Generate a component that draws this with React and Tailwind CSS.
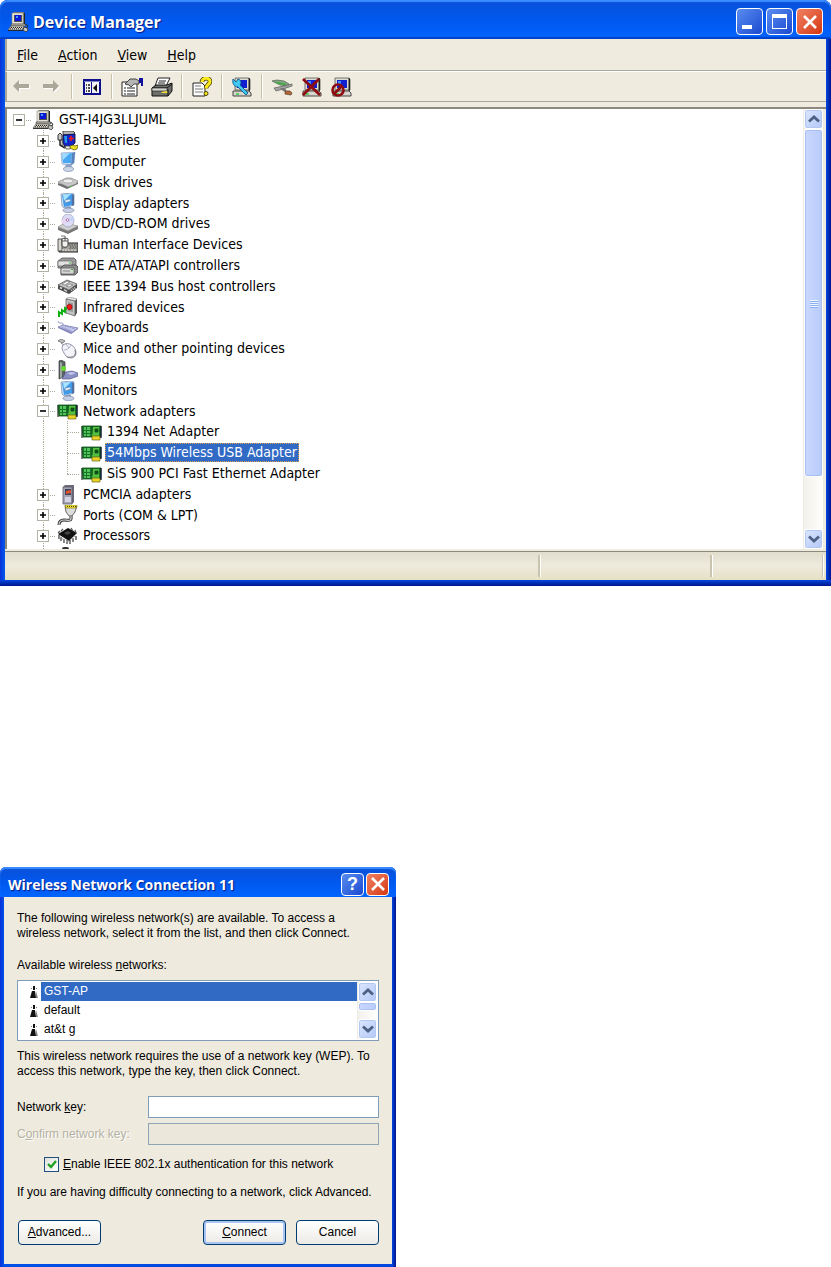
import React, { useState } from 'react';

const OldComputer = () => (
  <svg viewBox="0 0 21 20" className="w-[21px] h-5 shrink-0" aria-hidden="true">
    <path d="M5 1l1-1h10v12H5z" fill="#77756c" />
    <path d="M4 1h11v11H4z" fill="#e4e1d6" stroke="#8c8a80" strokeWidth="0.6" />
    <path d="M6 3h8v7H6z" fill="#55534c" />
    <path d="M7 3h6v6H7z" fill="#0a16d8" />
    <path d="M8 4h2v2H8z" fill="#3c9cf8" />
    <path d="M16 1h1v11h-1z" fill="#222" />
    <path d="M3 12h14l1 2H3z" fill="#b9b6aa" stroke="#444" strokeWidth="0.6" />
    <path d="M3 14h13l-2 4H0z" fill="#d8d5ca" stroke="#55534c" strokeWidth="0.7" />
    <path d="M3 15.500h11M2 16.800h11" stroke="#222" strokeDasharray="1 1" />
    <path d="M0 18.500h15" stroke="#222" strokeWidth="0.9" />
    <path d="M17 12l2 1 1 2-2 1" fill="none" stroke="#333" />
    <path d="M16 15l3 1 1 2-2 2-3-2z" fill="#c8c5bb" stroke="#333" strokeWidth="0.8" />
  </svg>
);

const Battery = () => (
  <svg viewBox="0 0 21 20" className="w-[21px] h-5 shrink-0" aria-hidden="true">
    <path d="M1 4l2-2 2 2v5H1z" fill="#c8c8c8" stroke="#222" strokeWidth="0.9" />
    <path d="M3 9v5l5 3" fill="none" stroke="#222" strokeWidth="1.5" />
    <path d="M5 8l3 2v7l-3-3z" fill="#d0d0cc" stroke="#333" strokeWidth="0.6" />
    <path d="M6 0h10l2 2-2 2H6z" fill="#b5b5b5" stroke="#222" strokeWidth="0.8" />
    <path d="M6 4l12-1v9l-4 4H8L6 12z" fill="#1424c8" stroke="#10103a" strokeWidth="0.9" />
    <path d="M7 5h3v7H8z" fill="#2898e8" />
    <path d="M14 5v5M12 7.500h5" stroke="#f01818" strokeWidth="1.6" />
    <path d="M8 15h7l-2 3H9z" fill="#e8e8e4" stroke="#333" strokeWidth="0.7" />
    <path d="M13 15l3-1 2 1 3-1-1 4-3 1-4-2z" fill="#e8e020" stroke="#5a5200" strokeWidth="0.7" />
  </svg>
);

const Computer = () => (
  <svg viewBox="0 0 21 20" className="w-[21px] h-5 shrink-0" aria-hidden="true">
    <path d="M4 1l14-1-1 11-4 3-8-2z" fill="#c9dcf4" stroke="#8ea6c8" strokeWidth="0.7" />
    <path d="M5 2l10-1-1 10-8 0z" fill="#49a8f2" />
    <path d="M5 2l8-1-7 7z" fill="#9fdcff" />
    <path d="M15 1l3-1-1 11-3 2z" fill="#5a83bc" />
    <path d="M9 12h5l1 4H8z" fill="#8ba3c6" />
    <ellipse cx="11.500" cy="17" rx="5" ry="2.400" fill="#cbd6e8" stroke="#7d8aa8" strokeWidth="0.7" />
  </svg>
);

const Disk = () => (
  <svg viewBox="0 0 21 20" className="w-[21px] h-5 shrink-0" aria-hidden="true">
    <path d="M1 10v2l9 4 11-5V9l-9 4z" fill="#6e6e6e" />
    <path d="M1 9l8-4h5l7 3-2 3-8 3z" fill="#c9c9c9" stroke="#8a8a8a" strokeWidth="0.7" />
    <ellipse cx="11" cy="8" rx="5" ry="2" fill="#eeeeee" stroke="#999" strokeWidth="0.6" />
    <path d="M13 13.500h2" stroke="#4cc04c" />
  </svg>
);

const Display = () => (
  <svg viewBox="0 0 21 20" className="w-[21px] h-5 shrink-0" aria-hidden="true">
    <path d="M4 1l11-1 2 1v11l-10 3-2-2z" fill="#d4dff0" stroke="#7089ae" strokeWidth="0.7" />
    <path d="M5 2l10-1v11l-8 2z" fill="#3f9bea" />
    <path d="M6 2l8-1-7 7z" fill="#a8e4ff" />
    <path d="M8 7l5-1 1 2-6 2z" fill="#e6eef8" stroke="#5b7fae" strokeWidth="0.6" />
    <path d="M15 1l2 1v10l-2 1z" fill="#5270a0" />
    <path d="M9 14h5v3H9z" fill="#8a9dbd" />
    <ellipse cx="11.500" cy="17.300" rx="5.500" ry="2.300" fill="#c6d0e4" stroke="#7d8aa8" strokeWidth="0.7" />
  </svg>
);

const Disc = () => (
  <svg viewBox="0 0 21 20" className="w-[21px] h-5 shrink-0" aria-hidden="true">
    <path d="M1 13v3l10 4 10-5v-3z" fill="#777" />
    <path d="M1 13l7-4 13 3-10 5z" fill="#cfcfcf" stroke="#8c8c8c" strokeWidth="0.7" />
    <ellipse cx="11" cy="6.500" rx="6" ry="6.500" fill="#dcdcf4" stroke="#a4a4c4" strokeWidth="0.8" />
    <path d="M11 6l5-4a7 7 0 0 1 1 5z" fill="#c4d2f8" />
    <path d="M11 6l-5 4a7 7 0 0 1-1-5z" fill="#e8d6f2" />
    <circle cx="10.500" cy="6" r="1.300" fill="#fff" stroke="#a050a0" strokeWidth="0.8" />
  </svg>
);

const Hid = () => (
  <svg viewBox="0 0 21 20" className="w-[21px] h-5 shrink-0" aria-hidden="true">
    <path d="M2 8h19v9H2z" fill="#a4a29a" stroke="#222" />
    <path d="M1 4h4v12H1z" fill="#d8d6d0" stroke="#333" strokeWidth="0.8" />
    <path d="M12 10h8M13 12h7M12 14h8" stroke="#444" strokeDasharray="1.500 1" />
    <path d="M5 15h14" stroke="#eee" strokeDasharray="2 1" />
    <path d="M5 4c0-1 6-1 6 0v6c0 3-6 3-6 0z" fill="#f2f0ea" stroke="#333" strokeWidth="0.9" />
    <path d="M8 1v5M5 6h6" stroke="#444" strokeWidth="0.8" />
    <path d="M4 1h4" stroke="#777" />
  </svg>
);

const Ide = () => (
  <svg viewBox="0 0 21 20" className="w-[21px] h-5 shrink-0" aria-hidden="true">
    <path d="M1 5l4-3h12l2 2v5l-3 3H1z" fill="#9a9a9a" stroke="#555" strokeWidth="0.8" />
    <path d="M1 5h14v5H1z" fill="#e2e2e2" stroke="#666" strokeWidth="0.7" />
    <path d="M4 12l3-3h12l2 2v5l-3 3H4z" fill="#8a8a8a" stroke="#444" strokeWidth="0.8" />
    <path d="M4 12h13v6H4z" fill="#d6d6d6" stroke="#555" strokeWidth="0.7" />
    <path d="M6 15h7" stroke="#888" />
    <path d="M14 13.500h2M12 7h2" stroke="#32b432" />
  </svg>
);

const Firewire = () => (
  <svg viewBox="0 0 21 20" className="w-[21px] h-5 shrink-0" aria-hidden="true">
    <path d="M1 8v4l11 5 8-6V7l-8 6z" fill="#4c4c4c" />
    <path d="M1 8l9-5 10 4-8 6z" fill="#c4c4c4" stroke="#555" strokeWidth="0.8" />
    <path d="M5 7l5-3 3 1-5 3zM9 9l4-2 3 1-4 2z" fill="#f0f0f0" stroke="#666" strokeWidth="0.6" />
    <path d="M3 10.500l2 1M7 12.500l3 2" stroke="#ddd" strokeWidth="1.500" />
    <path d="M14 13.500l5-3" stroke="#ccc" strokeDasharray="1 1" strokeWidth="2" />
  </svg>
);

const Infrared = () => (
  <svg viewBox="0 0 21 20" className="w-[21px] h-5 shrink-0" aria-hidden="true">
    <path d="M9 2l3-2 8 2-2 2z" fill="#ececec" stroke="#777" strokeWidth="0.6" />
    <path d="M9 2l9 2v15l-9-3z" fill="#c4c4c4" stroke="#555" strokeWidth="0.7" />
    <path d="M18 4l2-2v14l-2 3z" fill="#555" />
    <path d="M11 5l5 1v9l-5-1z" fill="#9a9a9a" />
    <circle cx="12.500" cy="10" r="2.700" fill="#f01c1c" stroke="#7c0808" strokeWidth="0.6" />
    <path d="M2 20v-5l3 2v-4l3 2v-4l2 1" fill="none" stroke="#10b010" strokeWidth="2" />
  </svg>
);

const KeyboardIcon = () => (
  <svg viewBox="0 0 21 20" className="w-[21px] h-5 shrink-0" aria-hidden="true">
    <path d="M1 3c0 4 6 0 5 4" fill="none" stroke="#9898c4" />
    <path d="M1 9l5-2 15 3-6 5z" fill="#c6c9ee" stroke="#7678b0" strokeWidth="0.8" />
    <path d="M1 9v1l13 6 7-5v-1l-6 4z" fill="#8486bc" />
    <path d="M5 9l10 4M8 8l10 3M4 10l9 3" stroke="#8286bc" strokeDasharray="1.500 1" strokeWidth="0.9" />
  </svg>
);

const MouseIcon = () => (
  <svg viewBox="0 0 21 20" className="w-[21px] h-5 shrink-0" aria-hidden="true">
    <path d="M1 2l3-2 4 2-2 2zM4 4l4 3" fill="#c2c2c2" stroke="#777" strokeWidth="0.9" />
    <path d="M6 6c5-4 13 1 13 8 0 6-7 6-10 3C6 13 4 9 6 6z" fill="#f4f4fa" stroke="#8888a0" strokeWidth="0.9" />
    <path d="M7 11c3 0 6-2 7-5M9 5l3 4" fill="none" stroke="#a0a0b8" strokeWidth="0.8" />
    <path d="M18 11c2 6-3 8-8 7" fill="none" stroke="#777" />
  </svg>
);

const Modem = () => (
  <svg viewBox="0 0 21 20" className="w-[21px] h-5 shrink-0" aria-hidden="true">
    <path d="M2 1l2-1 4 2v14l-6 3z" fill="#5c6464" stroke="#333" strokeWidth="0.7" />
    <path d="M3 2l2 1v14l-2 1z" fill="#9ca4a4" />
    <circle cx="6.500" cy="8.500" r="2.500" fill="#68d830" />
    <path d="M9 12l6-1 6 2v3l-8 3H5z" fill="#8a90c4" stroke="#585c8c" strokeWidth="0.7" />
    <path d="M10 13l5-1 4 1-5 2z" fill="#c4c8ec" />
  </svg>
);

const NetCard = () => (
  <svg viewBox="0 0 21 20" className="w-[21px] h-5 shrink-0" aria-hidden="true">
    <path d="M1 4v12" stroke="#555" strokeWidth="1.500" />
    <path d="M1 4h19v11H2z" fill="#1a7428" stroke="#0c4a16" strokeWidth="0.8" />
    <path d="M3 5h2v3H3zM6 5h3v3H6zM3 9h2v2H3zM6 9h3v2H6zM3 12h2v2H3zM6 12h3v2H6z" fill="#54c45c" />
    <path d="M12 5h6v9h-7z" fill="#54c040" />
    <path d="M11 4v8M14 7h3v3h-3z" fill="#105020" stroke="#0c4a16" strokeWidth="0.8" />
    <path d="M11 14h8v4h-8z" fill="#e8d228" stroke="#5a5200" strokeWidth="0.6" />
    <path d="M20 4v12" stroke="#113" strokeWidth="1.200" />
  </svg>
);

const Pcmcia = () => (
  <svg viewBox="0 0 21 20" className="w-[21px] h-5 shrink-0" aria-hidden="true">
    <path d="M6 2l2-2h9v17l-2 2z" fill="#6c6c7c" />
    <path d="M6 2h9v17l-9 0z" fill="#a4a4b4" stroke="#5c5c6c" strokeWidth="0.8" />
    <path d="M8 4h6v6H8z" fill="#404058" />
    <path d="M9 6l5-1v3l-5 1z" fill="#e05430" />
    <path d="M8 12h6v5H8z" fill="#d4d4e4" />
  </svg>
);

const Ports = () => (
  <svg viewBox="0 0 21 20" className="w-[21px] h-5 shrink-0" aria-hidden="true">
    <path d="M8 1l12 0-2 6-3 4h-3L9 7z" fill="#dcdcdc" stroke="#444" strokeWidth="0.8" />
    <path d="M8 0h12l-1 3H9z" fill="#f4e840" stroke="#8c7c00" strokeWidth="0.7" />
    <path d="M10 1.500h9" stroke="#554b00" strokeDasharray="1 1" />
    <path d="M14 11c1 6-3 4-7 4-4 0-5 2-5 5" fill="none" stroke="#333" strokeWidth="3" />
    <path d="M14 11c1 6-3 4-7 4-4 0-5 2-5 5" fill="none" stroke="#d4d4d4" strokeWidth="1.200" />
  </svg>
);

const Cpu = () => (
  <svg viewBox="0 0 21 20" className="w-[21px] h-5 shrink-0" aria-hidden="true">
    <path d="M2 9v4M4 11v4M7 13v4M10 14v4M13 14v4M16 12v4M19 10v4" stroke="#444" fill="none" strokeWidth="1.300" />
    <path d="M1 8l10-6 9 5-8 8z" fill="#111" />
    <path d="M3 5l-2 2M6 3L4 5M14 2l2 3M18 4l1 3" stroke="#555" strokeWidth="1.300" />
    <path d="M7 7l4-2 3 2-4 2z" fill="#444" />
    <path d="M3 11l8 5 8-7" fill="none" stroke="#aaa" strokeDasharray="1 1.500" strokeWidth="1.500" />
  </svg>
);

const devices = [
  { level: 0, label: 'GST-I4JG3LLJUML', icon: OldComputer, toggle: '-' },
  { level: 1, label: 'Batteries', icon: Battery, toggle: '+' },
  { level: 1, label: 'Computer', icon: Computer, toggle: '+' },
  { level: 1, label: 'Disk drives', icon: Disk, toggle: '+' },
  { level: 1, label: 'Display adapters', icon: Display, toggle: '+' },
  { level: 1, label: 'DVD/CD-ROM drives', icon: Disc, toggle: '+' },
  { level: 1, label: 'Human Interface Devices', icon: Hid, toggle: '+' },
  { level: 1, label: 'IDE ATA/ATAPI controllers', icon: Ide, toggle: '+' },
  { level: 1, label: 'IEEE 1394 Bus host controllers', icon: Firewire, toggle: '+' },
  { level: 1, label: 'Infrared devices', icon: Infrared, toggle: '+' },
  { level: 1, label: 'Keyboards', icon: KeyboardIcon, toggle: '+' },
  { level: 1, label: 'Mice and other pointing devices', icon: MouseIcon, toggle: '+' },
  { level: 1, label: 'Modems', icon: Modem, toggle: '+' },
  { level: 1, label: 'Monitors', icon: Display, toggle: '+' },
  { level: 1, label: 'Network adapters', icon: NetCard, toggle: '-' },
  { level: 2, label: '1394 Net Adapter', icon: NetCard },
  { level: 2, label: '54Mbps Wireless USB Adapter', icon: NetCard },
  { level: 2, label: 'SiS 900 PCI Fast Ethernet Adapter', icon: NetCard, last: true },
  { level: 1, label: 'PCMCIA adapters', icon: Pcmcia, toggle: '+' },
  { level: 1, label: 'Ports (COM & LPT)', icon: Ports, toggle: '+' },
  { level: 1, label: 'Processors', icon: Cpu, toggle: '+' }
];

const BackIcon = () => (
  <svg viewBox="0 0 18 15" className="w-[18px] h-[15px]" aria-hidden="true">
    <path d="M1 8l6-6v4h10v4H7v4z" fill="#fff" />
    <path d="M0 7l6-6v4h10v4H6v4z" fill="#aca899" />
  </svg>
);

const ForwardIcon = () => (
  <svg viewBox="0 0 18 15" className="w-[18px] h-[15px]" aria-hidden="true">
    <path d="M17 8l-6-6v4H1v4h10v4z" fill="#fff" />
    <path d="M16 7l-6-6v4H0v4h10v4z" fill="#aca899" />
  </svg>
);

const PaneIcon = () => (
  <svg viewBox="0 0 18 16" className="w-[18px] h-4" aria-hidden="true">
    <path d="M0 0h18v16H0z" fill="#10108c" />
    <path d="M1 2h16v1H1z" fill="#7c84c4" />
    <path d="M2 3h6v11H2zM9 3h7v11H9z" fill="#f4f4f4" />
    <path d="M3 6h1M5 6h2M3 9h1M5 9h2M3 12h1M5 12h2" stroke="#111" strokeWidth="1.300" />
    <path d="M14 5v8l-4-4z" fill="#111" />
  </svg>
);

const PropertiesIcon = () => (
  <svg viewBox="0 0 22 20" className="w-[22px] h-5" aria-hidden="true">
    <path d="M1 5h15v14H1z" fill="#fff" stroke="#222" />
    <path d="M3 11h2M3 14h2M3 17h2M6 11h8M6 14h8M6 17h8" stroke="#222" strokeWidth="1.200" />
    <path d="M4 7l5-5 6 0 3 2v3h-5l-3 3-2-2z" fill="#b4b4b4" stroke="#333" strokeWidth="0.900" />
    <path d="M18 1h4v8h-2V6h-2z" fill="#10109c" />
  </svg>
);

const PrinterIcon = () => (
  <svg viewBox="0 0 22 20" className="w-[22px] h-5" aria-hidden="true">
    <path d="M7 1h12l-4 8H4z" fill="#fff" stroke="#222" />
    <path d="M8 4h7M7 6h7" stroke="#222" />
    <path d="M1 11l4-3h11l5-2v8l-4 5H1z" fill="#6f6f6b" stroke="#111" />
    <path d="M1 11h15l5-4" fill="none" stroke="#111" />
    <path d="M1 11h15v3H1z" fill="#d6d6d2" stroke="#222" strokeWidth="0.700" />
    <path d="M10 15l6-1 1 2h-6z" fill="#f0e030" />
    <path d="M17 12v7" stroke="#111" />
  </svg>
);

const HelpIcon = () => (
  <svg viewBox="0 0 20 20" className="w-5 h-5" aria-hidden="true">
    <path d="M1 6h9l3 3v10H1z" fill="#fff" stroke="#222" />
    <path d="M3 9h6M3 12h8M3 15h8" stroke="#777" />
    <path d="M10 5c0-5 8-5 8-0.500 0 3-4 3.500-4 7" fill="none" stroke="#4a4200" strokeWidth="4.500" />
    <path d="M10 5c0-5 8-5 8-0.500 0 3-4 3.500-4 7" fill="none" stroke="#f8e81c" strokeWidth="3" />
    <circle cx="14" cy="16.500" r="2" fill="#f8e81c" stroke="#4a4200" />
  </svg>
);

// Small desktop machine shared by the scan, uninstall and disable buttons
const MachineShape = () => (
  <g>
    <path d="M4 1h14v12H4z" fill="#dedbd0" stroke="#555" strokeWidth="0.800" />
    <path d="M6 3h10v8H6z" fill="#1020d0" />
    <path d="M7 4h3v3H7z" fill="#4090f8" />
    <path d="M2 14h16l2 2v3H2z" fill="#d8d5cc" stroke="#333" strokeWidth="0.900" />
    <path d="M18 1v13l1-1V2z" fill="#222" stroke="#222" strokeWidth="0.600" />
    <path d="M5 17h3" stroke="#30d040" strokeWidth="1.500" />
  </g>
);

const ScanIcon = () => (
  <svg viewBox="0 0 22 20" className="w-[22px] h-5" aria-hidden="true">
    <MachineShape />
    <path d="M2 2l3 3 2-3c4 1 3 5 2 6l8 8-2 2-8-8C3 10 1 6 2 2z" fill="#40c8f0" stroke="#105890" strokeWidth="0.900" />
  </svg>
);

const UpdateIcon = () => (
  <svg viewBox="0 0 22 20" className="w-[22px] h-5" aria-hidden="true">
    <path d="M1 4l5-1 7 1 5 3-1 2-8-1z" fill="#8aa48a" stroke="#4a604a" strokeWidth="0.700" />
    <path d="M5 5.500l10 2" stroke="#3cae3c" strokeWidth="1.500" />
    <path d="M21 7l-8 2-10 2 2 3 7-2 9-3z" fill="#a4a4a0" stroke="#666" strokeWidth="0.800" />
    <path d="M9 11l3 3 4 1-2-4z" fill="#777" />
    <path d="M14 14l5 0 2 2-1 2-6-1z" fill="#b0683c" stroke="#5c3c24" strokeWidth="0.700" />
  </svg>
);

const UninstallIcon = () => (
  <svg viewBox="0 0 22 20" className="w-[22px] h-5" aria-hidden="true">
    <MachineShape />
    <path d="M2 2l17 16M18 2L2 18" stroke="#8c0c10" strokeWidth="2.800" />
  </svg>
);

const DisableIcon = () => (
  <svg viewBox="0 0 22 20" className="w-[22px] h-5" aria-hidden="true">
    <MachineShape />
    <circle cx="7" cy="13" r="5.500" fill="none" stroke="#8c0c10" strokeWidth="2.600" />
    <path d="M3 17l8-8" stroke="#8c0c10" strokeWidth="2.600" />
  </svg>
);

const toolbar = [
  { name: 'Back', icon: <BackIcon /> },
  { name: 'Forward', icon: <ForwardIcon /> },
  null,
  { name: 'Console tree', icon: <PaneIcon /> },
  null,
  { name: 'Properties', icon: <PropertiesIcon /> },
  { name: 'Print', icon: <PrinterIcon /> },
  null,
  { name: 'Help', icon: <HelpIcon /> },
  null,
  { name: 'Scan for hardware changes', icon: <ScanIcon /> },
  null,
  { name: 'Update driver', icon: <UpdateIcon /> },
  { name: 'Uninstall', icon: <UninstallIcon /> },
  { name: 'Disable', icon: <DisableIcon /> }
];

const Chevron = ({ down }) => (
  <svg viewBox="0 0 12 8" className={down ? 'w-3 h-2 rotate-180' : 'w-3 h-2'} aria-hidden="true">
    <path d="M1 6.500l5-4.500 5 4.500" fill="none" stroke="#4d6185" strokeWidth="2.800" />
  </svg>
);

const ScrollBar = ({ thumb, grip }) => (
  <div className="flex w-5 shrink-0 flex-col self-stretch border-l border-[#eeede5] bg-linear-to-r from-[#f3f1ec] to-[#fefefb]">
    <button type="button" aria-label="Scroll up" className="flex h-5 items-center justify-center rounded-[3px] border border-white bg-linear-to-br from-[#dbe6ff] to-[#b4c8f6] shadow-[inset_0_0_0_1px_#b3c8f0]">
      <Chevron />
    </button>
    <div className="min-h-0 flex-1">
      <div
        className="flex flex-col items-center justify-center gap-px rounded-[3px] border border-white bg-linear-to-r from-[#cad8ff] to-[#b8cbfa] shadow-[inset_0_0_0_1px_#a9bff0]"
        style={{ height: thumb }}
      >
        {grip && [0, 1, 2, 3].map(i => <span key={i} className="h-px w-2 bg-[#eef4fe] shadow-[0_1px_0_#8cb0f8]" />)}
      </div>
    </div>
    <button type="button" aria-label="Scroll down" className="flex h-5 items-center justify-center rounded-[3px] border border-white bg-linear-to-br from-[#dbe6ff] to-[#b4c8f6] shadow-[inset_0_0_0_1px_#b3c8f0]">
      <Chevron down />
    </button>
  </div>
);

const CloseGlyph = () => (
  <svg viewBox="0 0 16 16" className="w-4 h-4" aria-hidden="true">
    <path d="M2 2l12 12M14 2L2 14" stroke="#fff" strokeWidth="2.600" />
  </svg>
);

const TreeRow = ({ item, selected, onSelect }) => {
  const Icon = item.icon;
  return (
    <li className="flex h-[21px] items-center nth-[5n]:h-5" role="treeitem" aria-selected={selected}>
      {item.level > 0 && <span className="w-6 shrink-0" />}
      {item.level > 1 && (
        <span className="flex w-6 shrink-0 pl-3 self-stretch">
          <span className="border-l border-dotted border-[#aca899]" />
        </span>
      )}
      <span className="relative flex w-6 shrink-0 items-center justify-center self-stretch">
        {item.level > 0 && (
          <span className={item.last ? 'absolute left-3 top-0 h-1/2 border-l border-dotted border-[#aca899]' : 'absolute left-3 top-0 h-full border-l border-dotted border-[#aca899]'} />
        )}
        <span className="absolute left-3 right-0 top-1/2 border-t border-dotted border-[#aca899]" />
        {item.toggle && (
          <button type="button" aria-label={item.label} className="relative flex h-3 w-3 items-center justify-center border border-[#b4b2a4] bg-white">
            <svg viewBox="0 0 6 6" className="h-1.5 w-1.5" aria-hidden="true">
              <path d={item.toggle === '+' ? 'M0 3h6M3 0v6' : 'M0 3h6'} stroke="#000" strokeWidth="1.600" />
            </svg>
          </button>
        )}
      </span>
      <span className="w-0.5 shrink-0" />
      <Icon />
      <button
        type="button"
        onClick={onSelect}
        className={selected
          ? 'ml-[3px] h-[19px] whitespace-nowrap bg-[#316ac5] px-0.5 leading-[19px] text-white outline-1 -outline-offset-1 outline-dotted outline-[#e0a050]'
          : 'ml-[3px] h-[19px] whitespace-nowrap px-0.5 leading-[19px]'}
      >
        {item.label}
      </button>
    </li>
  );
};

const DeviceManager = () => {
  const [selected, setSelected] = useState('54Mbps Wireless USB Adapter');

  return (
    <section className="rounded-t-lg bg-[linear-gradient(to_right,#0831d9,#0058ee_5px,#0048e0_50%,#0048e0_calc(100%-5px),#00138c)] font-['DejaVu_Sans_Condensed','DejaVu_Sans',sans-serif] text-[14px] text-black">
      <header className="flex h-[39px] items-center rounded-t-lg bg-linear-to-b from-[#0a50d8] via-[#0058ee] to-[#0064ff] pt-1 pr-2 pl-2 shadow-[inset_0_2px_1px_#3c8cff,inset_0_-2px_1px_#0040c8]">
        <OldComputer />
        <h1 className="ml-1 flex-1 font-['Open_Sans',sans-serif] text-[16px] font-bold text-white [text-shadow:1px_1px_1px_#0a1883]">Device Manager</h1>
        <div className="flex gap-[3px]">
          <button type="button" aria-label="Minimize" className="flex h-[27px] w-[27px] items-end rounded-[4px] border border-white bg-linear-to-br from-[#5a8cf0] to-[#1c48d0] pb-[5px] pl-[5px]">
            <span className="h-1 w-[10px] bg-white" />
          </button>
          <button type="button" aria-label="Maximize" className="flex h-[27px] w-[27px] items-center justify-center rounded-[4px] border border-white bg-linear-to-br from-[#5a8cf0] to-[#1c48d0]">
            <span className="h-[15px] w-[15px] border border-t-4 border-white" />
          </button>
          <button type="button" aria-label="Close" className="flex h-[27px] w-[27px] items-center justify-center rounded-[4px] border border-white bg-linear-to-br from-[#f08060] to-[#d43408]">
            <CloseGlyph />
          </button>
        </div>
      </header>

      <div className="mx-[5px] bg-[#efebde]">
        <nav className="flex h-8 items-center gap-5 border-b border-l-2 border-[#aca899] pl-[10px] pt-0.5">
          <button type="button"><u>F</u>ile</button>
          <button type="button"><u>A</u>ction</button>
          <button type="button"><u>V</u>iew</button>
          <button type="button"><u>H</u>elp</button>
        </nav>
        <div className="flex h-[31px] items-center border-t border-b border-l-2 border-t-white border-b-[#aca899] border-l-[#aca899]">
          {toolbar.map((tool, i) =>
            tool ? (
              <button key={i} type="button" aria-label={tool.name} className="flex w-[30px] shrink-0 items-center justify-center">
                {tool.icon}
              </button>
            ) : (
              <span key={i} className="flex w-[10px] shrink-0 justify-center">
                <span className="h-[25px] w-[2px] border-l border-[#c8c2a8] bg-white" />
              </span>
            )
          )}
        </div>

        <div className="mt-[5px] flex border-t-2 border-l-2 border-[#8c8a7e] bg-white">
          <ul role="tree" className="min-w-0 flex-1 overflow-hidden">
            {devices.map(item => (
              <TreeRow
                key={item.label}
                item={item}
                selected={selected === item.label}
                onSelect={() => setSelected(item.label)}
              />
            ))}
            <li className="flex h-[3px] items-end pl-9" aria-hidden="true">
              <span className="h-full border-l border-dotted border-[#aca899]" />
              <span className="ml-[18px] h-0.5 w-[7px] rounded-t-sm bg-[#333]" />
            </li>
          </ul>
          <ScrollBar thumb="87%" grip />
          <span className="w-[3px] bg-[#efebde]" />
        </div>

        <footer className="mt-0.5 flex h-[29px] items-center border-t border-[#8c8a7e] bg-linear-to-b from-[#e2dece] via-[#eeeadd] to-[#e6e0c4]">
          <span className="h-[22px] flex-1" />
          <span className="h-[22px] w-[172px] border-l-2 border-[#c8c4b0] shadow-[inset_1px_0_0_#fff]" />
          <span className="h-[22px] w-[112px] border-l-2 border-[#c8c4b0] shadow-[inset_1px_0_0_#fff]" />
          <span className="mr-0.5 h-[22px] w-[2px] border-l border-[#c8c4b0] bg-white" />
        </footer>
      </div>
      <div className="h-[6px] bg-linear-to-b from-[#0848e0] to-[#00138c]" />
    </section>
  );
};

const Antenna = () => (
  <svg viewBox="0 0 10 14" className="h-[14px] w-[10px]" aria-hidden="true">
    <path d="M4 1h2v4H4z" fill="#111" />
    <path d="M3 6h3l1 7H1z" fill="#111" />
    <path d="M7 6l2 7H7z" fill="#888" />
    <path d="M2 3l1 1M8 3L7 4" stroke="#888" />
  </svg>
);

const networks = ['GST-AP', 'default', 'at&t g'];

const WirelessDialog = () => {
  const [network, setNetwork] = useState('GST-AP');
  const [networkKey, setNetworkKey] = useState('');
  const [enabled, setEnabled] = useState(true);

  return (
    <section className="w-full max-w-[396px] rounded-t-md bg-[linear-gradient(to_right,#0831d9,#0050e8_4px,#0048e0_50%,#0048e0_calc(100%-4px),#00138c)] pb-[3px] font-['Liberation_Sans',sans-serif] text-[12px] leading-[15px] text-black">
      <header className="flex h-[30px] items-center rounded-t-md bg-linear-to-b from-[#0a50d8] via-[#0058ee] to-[#0064ff] pt-1 pr-[7px] pl-2 shadow-[inset_0_2px_1px_#3c8cff]">
        <h2 className="flex-1 whitespace-nowrap font-['Open_Sans',sans-serif] text-[14px] font-bold text-white [text-shadow:1px_1px_1px_#0a1883]">Wireless Network Connection 11</h2>
        <div className="flex gap-0.5">
          <button type="button" aria-label="Help" className="flex h-[23px] w-[23px] items-center justify-center rounded-[4px] border border-white bg-linear-to-br from-[#5a8cf0] to-[#1c48d0] text-[18px] font-bold text-white">?</button>
          <button type="button" aria-label="Close" className="flex h-[23px] w-[23px] items-center justify-center rounded-[4px] border border-white bg-linear-to-br from-[#f08060] to-[#d43408]">
            <CloseGlyph />
          </button>
        </div>
      </header>

      <form className="mx-1 bg-[#eeeade] px-[13px] pt-[14px] pb-[19px]" onSubmit={e => e.preventDefault()}>
        <p>The following wireless network(s) are available. To access a wireless network, select it from the list, and then click Connect.</p>

        <p id="networks-label" className="mt-[17px]">Available wireless <u>n</u>etworks:</p>
        <div className="mt-[7px] flex border border-[#7f9db9] bg-white p-px">
          <ul role="listbox" aria-labelledby="networks-label" className="flex-1">
            {networks.map(name => (
              <li
                key={name}
                role="option"
                aria-selected={network === name}
                onClick={() => setNetwork(name)}
                className="flex h-[19px] items-center"
              >
                <span className="flex w-[22px] justify-end pr-0.5"><Antenna /></span>
                <span className={network === name ? 'flex-1 bg-[#316ac5] pl-[3px] leading-[19px] text-white' : 'flex-1 pl-[3px] leading-[19px]'}>{name}</span>
              </li>
            ))}
          </ul>
          <ScrollBar thumb="50%" />
        </div>

        <p className="mt-2">This wireless network requires the use of a network key (WEP). To access this network, type the key, then click Connect.</p>

        <div className="mt-[17px] flex items-center">
          <label htmlFor="key" className="w-[131px] shrink-0">Network <u>k</u>ey:</label>
          <input
            id="key"
            type="password"
            value={networkKey}
            onChange={e => setNetworkKey(e.target.value)}
            className="h-[22px] min-w-0 flex-1 border border-[#7f9db9] bg-white px-1"
          />
        </div>
        <div className="mt-[5px] flex items-center">
          <label htmlFor="confirm" className="w-[131px] shrink-0 text-[#b4b1a3] [text-shadow:1px_1px_0_#fff]">C<u>o</u>nfirm network key:</label>
          <input id="confirm" type="password" disabled className="h-[22px] min-w-0 flex-1 border border-[#8fa5b4] bg-[#ebe7da] px-1" />
        </div>

        <div className="mt-3 ml-[27px] flex items-center">
          <span className="relative flex h-[15px] w-[15px]">
            <input
              id="auth"
              type="checkbox"
              checked={enabled}
              onChange={e => setEnabled(e.target.checked)}
              className="h-[15px] w-[15px] appearance-none border border-[#1c5180] bg-linear-to-br from-[#e0e0da] to-white"
            />
            {enabled && (
              <svg viewBox="0 0 15 15" className="pointer-events-none absolute inset-0 h-[15px] w-[15px]" aria-hidden="true">
                <path d="M4 7l3 3 5-6" fill="none" stroke="#21a121" strokeWidth="2.400" />
              </svg>
            )}
          </span>
          <label htmlFor="auth" className="ml-1"><u>E</u>nable IEEE 802.1x authentication for this network</label>
        </div>

        <p className="mt-[13px] whitespace-nowrap">If you are having difficulty connecting to a network, click Advanced.</p>

        <div className="mt-5 flex gap-[10px] pl-px">
          <button type="button" className="h-[25px] w-[83px] rounded-[4px] border border-[#003c74] bg-linear-to-b from-white to-[#ecebe6]"><u>A</u>dvanced...</button>
          <button type="submit" className="ml-auto h-[25px] w-[83px] rounded-[4px] border border-[#003c74] bg-linear-to-b from-white to-[#ecebe6] shadow-[inset_0_0_0_2px_#a9c4f0]"><u>C</u>onnect</button>
          <button type="button" className="h-[25px] w-[83px] rounded-[4px] border border-[#003c74] bg-linear-to-b from-white to-[#ecebe6]">Cancel</button>
        </div>
      </form>
    </section>
  );
};

const App = () => {
  return (
    <main className="flex flex-col gap-[281px] bg-white">
      <DeviceManager />
      <WirelessDialog />
    </main>
  );
};

export default App;
